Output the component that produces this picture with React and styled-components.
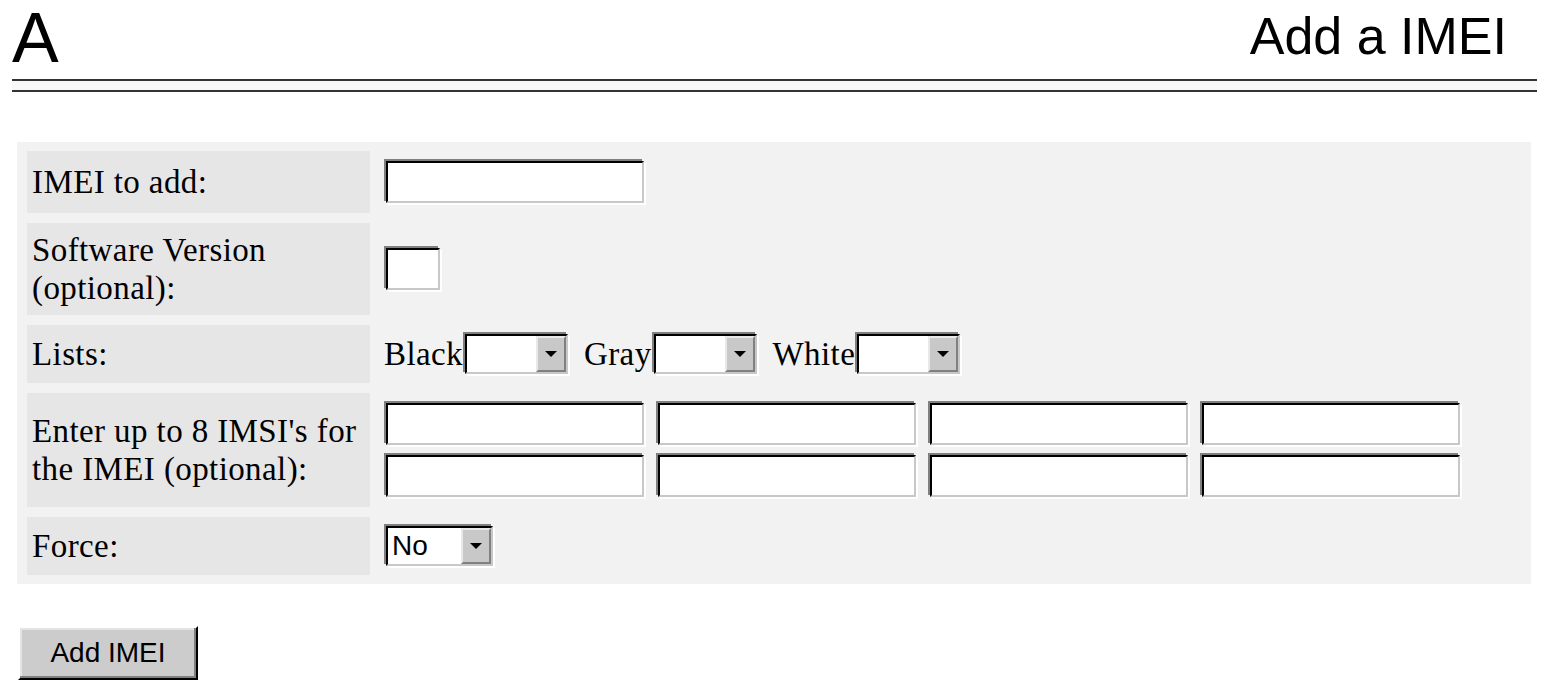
import React from "react";
import styled, { createGlobalStyle } from "styled-components";

const GlobalStyle = createGlobalStyle`
  body {
    margin: 0;
    background: #fff;
    color: #000;
    font-family: "Liberation Serif", "Times New Roman", serif;
  }
`;

const Page = styled.div`
  padding: 3px 15px 0 12px;
`;

const Header = styled.header`
  display: flex;
  justify-content: space-between;
  align-items: flex-start;
`;

const Logo = styled.h1`
  margin: 0;
  font: 400 70px/1 "Liberation Sans", Arial, sans-serif;
`;

const Title = styled.h2`
  margin: 7px 30px 0 0;
  font: 400 52px/1 "Liberation Sans", Arial, sans-serif;
`;

const Rule = styled.div`
  margin-top: 6px;
  height: 9px;
  border-top: 2px solid #333;
  border-bottom: 2px solid #333;
  background: #f8f8f8;
`;

const Panel = styled.form`
  display: grid;
  grid-template-columns: 343px 1fr;
  gap: 10px;
  margin: 50px 6px 0 5px;
  padding: 9px 10px;
  background: #f2f2f2;
`;

const Label = styled.div`
  display: flex;
  align-items: center;
  padding: 8px 5px;
  background: #e6e6e6;
  font-size: 33px;
  line-height: 38px;
  letter-spacing: 0.4px;
`;

const Field = styled.div`
  display: flex;
  align-items: center;
  padding: ${(p) => (p.$tight ? "7px 4px" : "8px 4px")};
  font-size: 33px;
  line-height: 38px;
  letter-spacing: 0.4px;
`;

const TextBox = styled.input`
  box-sizing: border-box;
  width: ${(p) => p.$w}px;
  height: 42px;
  margin: 2px;
  padding: 0 4px;
  border: 2px solid;
  border-color: #000 #c8c8c8 #c8c8c8 #000;
  box-shadow: -2px -2px 0 #808080, 2px 2px 0 #fff;
  background: #fff;
  font: 28px "Liberation Sans", Arial, sans-serif;
  outline: none;
`;

const ImsiGrid = styled.div`
  display: grid;
  grid-template-columns: repeat(4, 262px);
  column-gap: 10px;
  row-gap: 6px;
`;

const ListName = styled.span`
  margin-left: ${(p) => (p.$first ? 0 : 14)}px;
`;

const SelectBox = styled.div`
  box-sizing: border-box;
  display: flex;
  width: ${(p) => p.$w}px;
  height: 40px;
  margin: 2px;
  border: 2px solid;
  border-color: #000 #c8c8c8 #c8c8c8 #000;
  box-shadow: -2px -2px 0 #808080, 2px 2px 0 #fff;
  background: #fff;
  letter-spacing: 0;
`;

const SelectValue = styled.span`
  flex: 1;
  padding-left: 4px;
  font: 28px/36px "Liberation Sans", Arial, sans-serif;
`;

const SelectArrow = styled.span`
  box-sizing: border-box;
  width: 30px;
  display: flex;
  align-items: center;
  justify-content: center;
  background: #c8c8c8;
  border: 2px solid;
  border-color: #e8e8e8 #808080 #808080 #e8e8e8;
`;

const Actions = styled.div`
  margin: 42px 0 0 6px;
`;

const SubmitButton = styled.button`
  box-sizing: border-box;
  width: 180px;
  height: 54px;
  padding: 0;
  background: #ccc;
  border: 2px solid;
  border-color: #fff #000 #000 #fff;
  box-shadow: inset -2px -2px 0 #808080, inset 2px 2px 0 #e4e4e4;
  font: 28px "Liberation Sans", Arial, sans-serif;
  color: #000;
`;

function Select({ width, value }) {
  return (
    <SelectBox $w={width}>
      <SelectValue>{value}</SelectValue>
      <SelectArrow>
        <svg width="12" height="6" viewBox="0 0 12 6">
          <path d="M0 0h12L6 6z" fill="#000" />
        </svg>
      </SelectArrow>
    </SelectBox>
  );
}

export default function App() {
  const imsis = [0, 1, 2, 3, 4, 5, 6, 7];

  return (
    <Page>
      <GlobalStyle />
      <Header>
        <Logo>A</Logo>
        <Title>Add a IMEI</Title>
      </Header>
      <Rule />

      <Panel onSubmit={(e) => e.preventDefault()}>
        <Label><span>IMEI to add:</span></Label>
        <Field><TextBox $w={258} /></Field>

        <Label><span>Software Version<br />(optional):</span></Label>
        <Field><TextBox $w={54} /></Field>

        <Label><span>Lists:</span></Label>
        <Field $tight>
          <ListName $first>Black</ListName>
          <Select width={103} />
          <ListName>Gray</ListName>
          <Select width={103} />
          <ListName>White</ListName>
          <Select width={103} />
        </Field>

        <Label><span>Enter up to 8 IMSI's for<br />the IMEI (optional):</span></Label>
        <Field>
          <ImsiGrid>
            {imsis.map((i) => (
              <TextBox key={i} $w={258} />
            ))}
          </ImsiGrid>
        </Field>

        <Label><span>Force:</span></Label>
        <Field $tight><Select width={107} value="No" /></Field>
      </Panel>

      <Actions>
        <SubmitButton type="button">Add IMEI</SubmitButton>
      </Actions>
    </Page>
  );
}
